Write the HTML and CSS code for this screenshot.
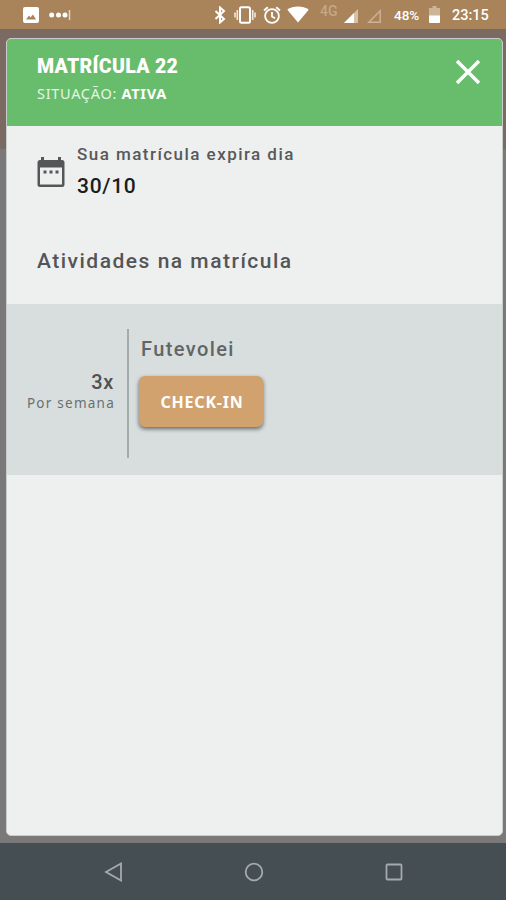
FILE: index.html
```html
<!DOCTYPE html>
<html lang="pt-BR">
<head>
    <meta charset="UTF-8">
    <meta name="viewport" content="width=device-width, initial-scale=1.0">
    <title>Matrícula</title>
    <link rel="stylesheet" href="styles.css">
</head>
<body>
    <div class="status-bar">
        <div class="status-left">
            <svg width="16" height="16" viewBox="0 0 16 16"><path fill="#fff" fill-rule="evenodd" d="M2 0h12a2 2 0 0 1 2 2v12a2 2 0 0 1-2 2H2a2 2 0 0 1-2-2V2a2 2 0 0 1 2-2zM3 12.500h10L10 7.500l-2.500 3L6 8.500z"/></svg>
            <svg width="23" height="12" viewBox="0 0 23 12"><g fill="#fff"><circle cx="2.700" cy="6" r="2.500"/><circle cx="9.500" cy="6" r="2.500"/><circle cx="16" cy="6" r="2.500"/></g><path d="M20.500 1v10" stroke="#e3d3c0" stroke-width="1.500"/></svg>
        </div>
        <div class="status-right">
            <svg class="bluetooth" width="12" height="18" viewBox="0 0 12 18"><path d="M1.500 5l8.500 8-4 3.500v-15L10 5l-8.500 8" fill="none" stroke="#fff" stroke-width="2"/></svg>
            <svg class="vibrate" width="22" height="18" viewBox="0 0 22 18"><rect x="6" y="1.200" width="10" height="15.600" rx="1.500" fill="none" stroke="#fff" stroke-width="2"/><path d="M3.300 4v10M18.700 4v10M1 6.500v5M21 6.500v5" stroke="#f3e9dd" stroke-width="1.600"/></svg>
            <svg class="alarm" width="18" height="18" viewBox="0 0 18 18"><g fill="none" stroke="#fff" stroke-width="1.800"><circle cx="9" cy="10" r="6.900"/><path d="M1 4.500L4.800 1.200M17 4.500l-3.800-3.300M9 6v4.500l3 1.800"/></g></svg>
            <svg class="wifi" width="22" height="17" viewBox="0 0 22 17"><path fill="#fff" d="M11 16.500L.3 3.800C6-.6 16-.6 21.700 3.800z"/></svg>
            <span class="network">4G</span>
            <svg class="signal" width="14" height="14" viewBox="0 0 14 14"><path fill="#d8c2a6" d="M0 14L14 0v14z"/><path fill="#fff" d="M0 14L10 4v10z"/></svg>
            <svg class="signal-empty" width="14" height="14" viewBox="0 0 14 14"><path fill="none" stroke="#cdb192" stroke-width="1.500" d="M1.800 13.200L13.200 1.800v11.400z"/></svg>
            <span class="percent">48%</span>
            <svg class="battery" width="11" height="17" viewBox="0 0 11 17"><path fill="#cbb498" d="M3.500 0h4v2H11v8H0V2h3.500z"/><path fill="#fff" d="M0 9.500h11V16a1 1 0 0 1-1 1H1a1 1 0 0 1-1-1z"/></svg>
            <span class="clock">23:15</span>
        </div>
    </div>

    <div class="backdrop">
        <div class="modal">
            <div class="modal-header">
                <div>
                    <h1>MATRÍCULA 22</h1>
                    <p class="situation">SITUAÇÃO: <b>ATIVA</b></p>
                </div>
                <svg class="close" width="26" height="26" viewBox="0 0 26 26"><path d="M2 2l22 22M24 2L2 24" stroke="#fff" stroke-width="3.400"/></svg>
            </div>
            <div class="expiration">
                <svg class="calendar" width="28" height="31" viewBox="0 0 28 31"><path fill="#555658" fill-rule="evenodd" d="M4 0h3v3h14V0h3v3h1a2.500 2.500 0 0 1 2.500 2.500v22A2.500 2.500 0 0 1 25 30H3a2.500 2.500 0 0 1-2.500-2.500v-22A2.500 2.500 0 0 1 3 3h1zM3 10.500v17h22v-17z"/><path fill="#555658" d="M6.500 13.500h3v3h-3zM12.500 13.500h3v3h-3zM18.500 13.500h3v3h-3z"/></svg>
                <div>
                    <p class="expiration-label">Sua matrícula expira dia</p>
                    <p class="expiration-date">30/10</p>
                </div>
            </div>
            <h2>Atividades na matrícula</h2>
            <div class="activity">
                <div class="frequency">
                    <p class="times">3x</p>
                    <p class="period">Por semana</p>
                </div>
                <div class="activity-info">
                    <p class="activity-name">Futevolei</p>
                    <button class="checkin">CHECK-IN</button>
                </div>
            </div>
        </div>
    </div>

    <div class="nav-bar">
        <svg width="20" height="20" viewBox="0 0 20 20"><path d="M2 10L17 1.500v17z"/></svg>
        <svg width="20" height="20" viewBox="0 0 20 20"><circle cx="10" cy="10" r="8.300"/></svg>
        <svg width="20" height="20" viewBox="0 0 20 20"><rect x="2.500" y="2.500" width="15" height="15" rx="1"/></svg>
    </div>
</body>
</html>
```
FILE: styles.css
```css
* {
    box-sizing: border-box;
}
body {
    display: flex;
    flex-direction: column;
    height: 100vh;
    margin: 0;
    font-family: Roboto, sans-serif;
    overflow: hidden;
}
h1, h2, p {
    margin: 0;
    white-space: nowrap;
}
svg {
    display: block;
    flex-shrink: 0;
}
.status-bar {
    display: flex;
    justify-content: space-between;
    height: 29px;
    padding: 0 17px 0 23px;
    background-color: #a9845b;
    color: #fff;
}
.status-left, .status-right {
    display: flex;
    align-items: center;
}
.status-left {
    gap: 10px;
}
.vibrate {
    margin-left: 8px;
}
.alarm {
    margin-left: 7px;
}
.wifi {
    margin-left: 6px;
}
.network {
    width: 18px;
    margin: -7px 6px 0 11px;
    color: #c6a786;
    font-size: 14px;
    font-weight: 500;
}
.signal, .signal-empty {
    margin-top: 3px;
}
.signal-empty {
    margin-left: 9px;
}
.percent {
    width: 27px;
    margin: 1px 8px 0 13px;
    font-size: 13.5px;
    font-weight: 500;
}
.clock {
    width: 37px;
    margin: 1px 0 0 12px;
    font-size: 14.5px;
    font-weight: 500;
}
.backdrop {
    height: 814px;
    padding: 9px 3px 7px 6px;
    background: linear-gradient(#7a6a61 120px, #7a7879 120px);
}
.modal {
    height: 798px;
    border-radius: 5px;
    border: 1px solid #c9cdca;
    background-color: #eef0ef;
    overflow: hidden;
}
.modal-header {
    display: flex;
    justify-content: space-between;
    height: 87px;
    padding: 16px 21px 0 30px;
    background-color: #67bd6c;
    color: #fff;
}
h1 {
    font-size: 19.5px;
    font-weight: 900;
    line-height: 24px;
    letter-spacing: 0.3px;
}
.situation {
    margin-top: 3px;
    font-family: "Noto Sans", sans-serif;
    font-size: 14.5px;
    line-height: 22px;
    letter-spacing: 0.7px;
    color: #e3f6e3;
}
.situation b {
    color: #fff;
}
.close {
    margin-top: 4px;
}
.expiration {
    display: flex;
    height: 114px;
    padding: 16px 0 0 30px;
}
.calendar {
    margin: 15px 12px 0 0;
}
.expiration-label {
    font-size: 17px;
    font-weight: 500;
    line-height: 24px;
    letter-spacing: 1.45px;
    color: #58595b;
}
.expiration-date {
    margin-top: 7px;
    font-size: 21px;
    font-weight: 500;
    line-height: 26px;
    letter-spacing: 0.7px;
    color: #1c1c1d;
}
h2 {
    height: 64px;
    padding-left: 30px;
    font-size: 21px;
    font-weight: 500;
    line-height: 42px;
    letter-spacing: 1.5px;
    color: #545557;
}
.activity {
    display: flex;
    height: 171px;
    padding: 25px 0 17px;
    background-color: #d7dedd;
}
.frequency {
    width: 122px;
    padding: 40px 12px 0 0;
    border-right: 2px solid #a3abab;
    text-align: right;
}
.times {
    padding-right: 1px;
    font-size: 20px;
    font-weight: 500;
    line-height: 26px;
    letter-spacing: 0.7px;
    color: #4f5153;
}
.period {
    font-family: "Noto Sans", sans-serif;
    font-size: 13.5px;
    line-height: 16px;
    letter-spacing: 1.25px;
    color: #6b6f72;
}
.activity-info {
    padding: 7px 0 0 10px;
}
.activity-name {
    padding-left: 2px;
    font-size: 20px;
    font-weight: 500;
    line-height: 26px;
    letter-spacing: 1.4px;
    color: #626567;
}
.checkin {
    display: block;
    width: 124px;
    height: 51px;
    margin-top: 14px;
    padding: 0 0 0 2px;
    border: none;
    border-radius: 6px;
    background-color: #d1a26d;
    box-shadow: 0 2px 4px rgba(0, 0, 0, 0.55);
    color: #fff;
    font-family: "Noto Sans", sans-serif;
    font-size: 16px;
    font-weight: bold;
    letter-spacing: 0.8px;
}
.nav-bar {
    display: flex;
    flex: 1;
    justify-content: center;
    align-items: center;
    gap: 120px;
    padding-left: 2px;
    background-color: #454e53;
}
.nav-bar svg {
    fill: none;
    stroke: #a3abae;
    stroke-width: 1.800;
}
```
